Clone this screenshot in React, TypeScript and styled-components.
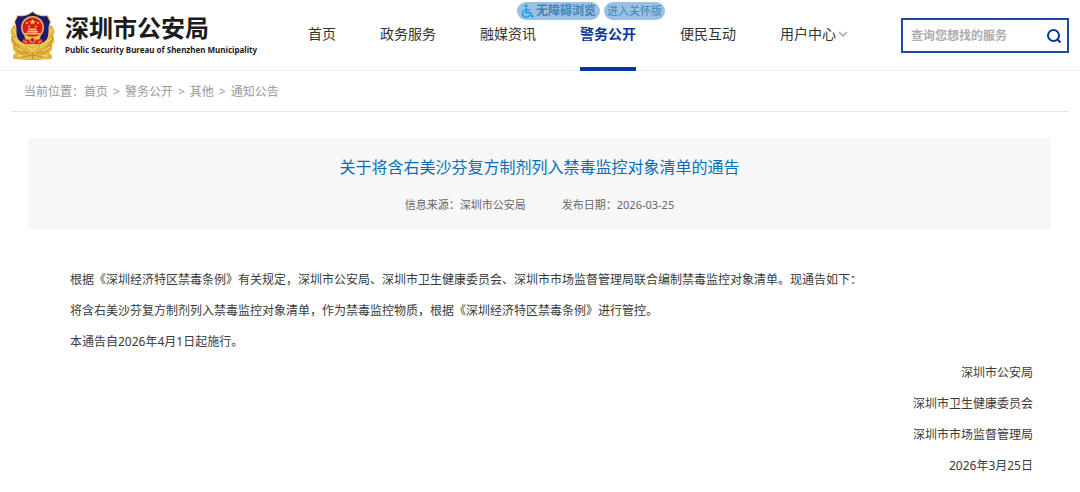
import React from "react";
import styled, { createGlobalStyle } from "styled-components";

const GlobalStyle = createGlobalStyle`
  *, *::before, *::after { box-sizing: border-box; }
  body {
    margin: 0;
    background: #fff;
    color: #3a3a3a;
    font-family: "Noto Sans", "Noto Sans CJK SC", sans-serif;
    font-size: 12px;
  }
  a { color: inherit; text-decoration: none; }
  h1, p { margin: 0; font-weight: 400; }
`;

const Header = styled.header`
  position: relative;
  display: flex;
  align-items: flex-start;
  padding: 0 11px 0 10px;
  border-bottom: 1px solid #f0f0f0;
`;

const Brand = styled.a`
  display: flex;
  align-items: center;
  flex: none;
  gap: 10px;
  height: 70px;
  padding-top: 2px;
  color: #1c1c1c;
`;

const BrandText = styled.span`
  display: flex;
  flex-direction: column;
  white-space: nowrap;
`;

const BrandName = styled.strong`
  font-size: 24px;
  line-height: 28px;
  font-weight: 700;
`;

const BrandLatin = styled.span`
  font-family: "Noto Sans", sans-serif;
  font-size: 8px;
  line-height: 16px;
  font-weight: 700;
`;

const Nav = styled.nav`
  display: flex;
  flex: none;
  gap: 44px;
  margin-left: 51px;
`;

const NavLink = styled.a<{ $active?: boolean }>`
  display: flex;
  align-items: center;
  gap: 2px;
  height: 71px;
  margin-bottom: -1px;
  padding-top: 2px;
  padding-bottom: 1px;
  border-bottom: 4px solid ${(p) => (p.$active ? "#08369b" : "transparent")};
  color: ${(p) => (p.$active ? "#08369b" : "#333")};
  font-size: 14px;
  line-height: 20px;
  font-weight: ${(p) => (p.$active ? 700 : 400)};
  white-space: nowrap;
`;

const Search = styled.form`
  display: flex;
  align-items: center;
  width: 168px;
  height: 35px;
  margin: 18px 0 0 auto;
  padding: 0 5px 0 8px;
  border: 2px solid #2248a5;
`;

const SearchInput = styled.input`
  flex: 1;
  min-width: 0;
  height: 28px;
  padding: 0;
  border: 0;
  outline: 0;
  background: none;
  font: inherit;
  font-weight: 700;
  &::placeholder { color: #adadad; opacity: 1; }
`;

const SearchButton = styled.button`
  display: flex;
  padding: 0;
  border: 0;
  background: none;
  color: #08369b;
  cursor: pointer;
`;

const Helpers = styled.div`
  position: absolute;
  top: 2px;
  left: calc(50% - 23px);
  display: flex;
  gap: 4px;
`;

const Helper = styled.button<{ $strong?: boolean }>`
  display: flex;
  align-items: center;
  gap: 2px;
  height: 18px;
  padding: 0 ${(p) => (p.$strong ? 4 : 3)}px;
  border: 0;
  border-radius: 9px;
  background: #99c1e4;
  color: #4584b8;
  font-family: inherit;
  font-size: ${(p) => (p.$strong ? 12 : 11)}px;
  line-height: 18px;
  font-weight: ${(p) => (p.$strong ? 700 : 400)};
  white-space: nowrap;
  cursor: pointer;
`;

const Breadcrumb = styled.nav`
  display: flex;
  gap: 5px;
  margin: 0 11px;
  padding: 11px 13px 9px;
  border-bottom: 1px solid #e6e6e6;
  color: #999;
  line-height: 20px;
`;

const Article = styled.main`
  padding: 26px 29px 12px 28px;
`;

const Heading = styled.header`
  padding: 17px 20px 14px;
  background: #f7f7f7;
  text-align: center;
`;

const Title = styled.h1`
  color: #0c6cbb;
  font-size: 16px;
  line-height: 24px;
`;

const Meta = styled.div`
  display: flex;
  justify-content: center;
  gap: 36px;
  margin-top: 16px;
  color: #666;
  font-size: 11px;
  line-height: 20px;
`;

const Content = styled.div`
  padding: 35px 18px 0 42px;
  line-height: 31px;
`;

const Signature = styled.div`
  text-align: right;
`;

const Emblem = () => (
  <svg width="45" height="50" viewBox="0 0 45 50" aria-hidden="true">
    <path d="M4 14C1 17-1 21 2 25c-2 3-1 7 1 9-1 4 1 7 3 8-3 1-4 4-2 6 5 0 11 1 18.500 1s13.500-1 18.500-1c2-2 1-5-2-6 2-1 4-4 3-8 2-2 3-6 1-9 3-4 1-8-2-11z" fill="#e2b63d" />
    <path d="M2 25c2 8 7 14 17 18M4 34c3 6 8 9 15 11M43 25c-2 8-7 14-17 18M41 34c-3 6-8 9-15 11" fill="none" stroke="#b98222" />
    <path d="M3 18l4 7M3 27l6 5M5 36l8 4M42 18l-4 7M42 27l-6 5M40 36l-8 4M7 45l10-1M38 45l-10-1" stroke="#f6df86" />
    <path d="M22.500 0C18 4 12 5 7 4L4 11c3 6 0 11 3 18 2 5 8 8 15.500 14C30 37 36 34 38 29c3-7 0-12 3-18l-3-7C33 5 27 4 22.500 0z" fill="#efcb55" />
    <path d="M22.500 1C18 5 13 6 8 5l-3 6c3 7 0 11 3 17 2 3 6 5 14.500 5S35 31 37 28c3-6 0-10 3-17l-3-6C32 6 27 5 22.500 1z" fill="#1c1a72" />
    <path d="M12 29c3-2 18-2 21 0l-2 4H14z" fill="#d92621" />
    <path d="M15 32l7.500 5 7.500-5-1 5-6.500 5-6.500-5z" fill="#efcb55" stroke="#b98222" strokeWidth=".6" />
    <circle cx="22.500" cy="16.500" r="11.500" fill="#e4bd48" />
    <circle cx="22.500" cy="16.500" r="10" fill="#dc1820" />
    <path d="M22.500 8l.9 2h2.200l-1.700 1.400.6 2.100-2-1.200-2 1.200.6-2.100-1.700-1.400h2.200z" fill="#f7d84f" />
    <g fill="#f4cf48">
      <circle cx="17" cy="12" r="1" />
      <circle cx="28" cy="12" r="1" />
      <circle cx="19" cy="15.500" r=".9" />
      <circle cx="26" cy="15.500" r=".9" />
    </g>
    <path d="M19 17.500h7l1.500 2h-10zM17 20h11v1.500H17zM15 22h15v1.500H15z" fill="#f3cf50" />
    <path d="M14 25.500h17l-2 3H16z" fill="#efc94c" />
    <path d="M13 30l4 1M32 30l-4 1" stroke="#e7b43b" />
    <circle cx="22.500" cy="29" r="2.500" fill="#da1820" stroke="#edc34b" />
    <path d="M11 45c7-3 16-3 23 0l-4 4H15z" fill="#e6b940" />
    <path d="M13 46c6-2 13-2 19 0M22.500 42v6" fill="none" stroke="#b37a22" strokeWidth=".8" />
  </svg>
);

const Wheelchair = () => (
  <svg width="13" height="14" viewBox="0 0 13 14" fill="none" stroke="#2098e0" aria-hidden="true">
    <circle cx="5" cy="1.800" r="1.500" fill="#2098e0" stroke="none" />
    <path d="M5 3.500v5.300h4.300l1.700 3.700 1.700-.7M5 6h4" strokeWidth="1.600" />
    <path d="M3.600 6.200a3.700 3.700 0 1 0 5 4.900" strokeWidth="1.400" />
  </svg>
);

const Chevron = () => (
  <svg width="10" height="8" viewBox="0 0 10 8" fill="none" aria-hidden="true">
    <path d="M1 2l4 4 4-4" stroke="#aaa" strokeWidth="1.500" />
  </svg>
);

const Magnifier = () => (
  <svg width="16" height="16" viewBox="0 0 16 16" fill="none" stroke="currentColor" strokeWidth="2" aria-hidden="true">
    <circle cx="7.500" cy="7.500" r="5.500" />
    <path d="M11.500 11.500l3 3" />
  </svg>
);

const links = ["首页", "政务服务", "融媒资讯", "警务公开", "便民互动", "用户中心"];
const crumbs = ["首页", "警务公开", "其他", "通知公告"];
const paragraphs = [
  "根据《深圳经济特区禁毒条例》有关规定，深圳市公安局、深圳市卫生健康委员会、深圳市市场监督管理局联合编制禁毒监控对象清单。现通告如下：",
  "将含右美沙芬复方制剂列入禁毒监控对象清单，作为禁毒监控物质，根据《深圳经济特区禁毒条例》进行管控。",
  "本通告自2026年4月1日起施行。",
];
const signatures = ["深圳市公安局", "深圳市卫生健康委员会", "深圳市市场监督管理局", "2026年3月25日"];

export default function App() {
  return (
    <div lang="zh-CN">
      <GlobalStyle />
      <Header>
        <Brand href="#">
          <Emblem />
          <BrandText>
            <BrandName>深圳市公安局</BrandName>
            <BrandLatin>Public Security Bureau of Shenzhen Municipality</BrandLatin>
          </BrandText>
        </Brand>
        <Nav>
          {links.map((label) => (
            <NavLink key={label} href="#" $active={label === "警务公开"}>
              {label}
              {label === "用户中心" && <Chevron />}
            </NavLink>
          ))}
        </Nav>
        <Search role="search">
          <SearchInput type="text" aria-label="查询您想找的服务" placeholder="查询您想找的服务" />
          <SearchButton type="button" aria-label="搜索">
            <Magnifier />
          </SearchButton>
        </Search>
        <Helpers>
          <Helper type="button" $strong>
            <Wheelchair />
            无障碍浏览
          </Helper>
          <Helper type="button">进入关怀版</Helper>
        </Helpers>
      </Header>
      <Breadcrumb>
        <span>当前位置：<a href="#">{crumbs[0]}</a></span>
        {crumbs.slice(1).map((label) => (
          <React.Fragment key={label}>
            <span>&gt;</span>
            <a href="#">{label}</a>
          </React.Fragment>
        ))}
      </Breadcrumb>
      <Article>
        <Heading>
          <Title>关于将含右美沙芬复方制剂列入禁毒监控对象清单的通告</Title>
          <Meta>
            <span>信息来源：深圳市公安局</span>
            <span>发布日期：2026-03-25</span>
          </Meta>
        </Heading>
        <Content>
          {paragraphs.map((text) => (
            <p key={text}>{text}</p>
          ))}
          <Signature>
            {signatures.map((text) => (
              <p key={text}>{text}</p>
            ))}
          </Signature>
        </Content>
      </Article>
    </div>
  );
}
